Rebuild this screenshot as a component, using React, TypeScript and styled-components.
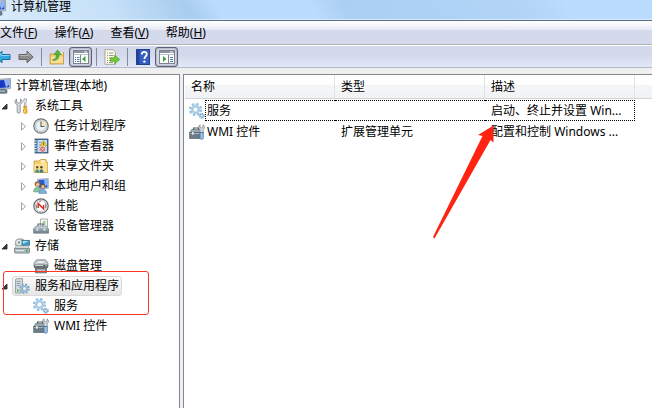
import React from "react";
import styled, { createGlobalStyle, css } from "styled-components";

const GlobalStyle = createGlobalStyle`
  * { box-sizing: border-box; }
  body {
    margin: 0;
    background: #efefef;
    color: #000;
    font: 12px/16px "Noto Sans", "Noto Sans CJK SC", sans-serif;
  }
  button { font: inherit; color: inherit; background: none; border: 0; padding: 0; margin: 0; }
  svg { display: block; flex: none; }
`;

/* ---------- icons ---------- */

type IconProps = { clipLeft?: number; children?: React.ReactNode };

const Icon = ({ clipLeft = 0, children }: IconProps) => (
  <svg
    width={16 - clipLeft}
    height={16}
    viewBox={`${clipLeft} 0 ${16 - clipLeft} 16`}
    aria-hidden="true"
  >
    {children}
  </svg>
);

const ComputerIcon = ({ clipLeft = 5 }: { clipLeft?: number }) => (
  <Icon clipLeft={clipLeft}>
    <path d="M2 1.5 15.5.5v10L3 11.5z" fill="#c9d0d8" stroke="#8a95a5" strokeWidth=".8" />
    <path d="M3 2.5 14.3 1.7v7.6L4 10z" fill="#1739c4" />
    <path d="M9 2.1 14.3 1.7v4.8L11 9.5z" fill="#8fb4f4" />
    <path d="M5 10.5h5v3H5z" fill="#8b98a3" />
    <rect x="3.5" y="11.5" width="8.5" height="3.8" rx="1" fill="#6d7f8c" stroke="#4e606c" strokeWidth=".6" />
    <path d="M5 13h5" stroke="#c2d0d6" />
  </Icon>
);

const ToolsIcon = () => (
  <Icon>
    <path
      d="M2.5 1v3.2l2 1 2-1V1c1.8.8 2.2 3.4.4 5l-.7.7v7.5c0 1.3-3 1.3-3 0V6.7L2 6C.4 4.5.8 2 2.5 1z"
      fill="#d8dcdf"
      stroke="#7d868c"
      strokeWidth=".8"
    />
    <path d="M10 .8h2.2l.4 3-.8 1V9h-1.4V4.8l-.8-1z" fill="#e8eaec" stroke="#8d9499" strokeWidth=".7" />
    <path d="M9.5 8.5h3.4l-.6 2 .7 1.2v2.8c0 1.2-3.500 1.2-3.500 0v-2.800l.7-1.200z" fill="#f4b52c" stroke="#c58512" strokeWidth=".7" />
    <path d="M10.8 11.5v3" stroke="#ffe6a0" />
  </Icon>
);

const ClockIcon = () => (
  <Icon>
    <circle cx="8" cy="8" r="7.2" fill="#dfe6ea" stroke="#6f767a" strokeWidth="1.2" />
    <circle cx="8" cy="8" r="5.4" fill="#e8f2f8" stroke="#a5adb2" strokeWidth=".7" />
    <path d="M8 8V2.6A5.4 5.4 0 0 1 13.4 8z" fill="#f8e4b6" />
    <path d="M8 3.5V8.5h3.5" fill="none" stroke="#50606c" strokeWidth="1.1" />
  </Icon>
);

const EventIcon = () => (
  <Icon>
    <rect x="2" y="1" width="13" height="14" fill="#4f79a8" stroke="#33536f" strokeWidth=".8" />
    <rect x="4.5" y="2" width="9.5" height="12" fill="#c4dcef" />
    <path d="M6 4.5h3M6 7h3M6 9.5h2M6 12h2" stroke="#7f9bb4" strokeWidth=".8" />
    <path d="M1.2 3h2.3M1.2 5.5h2.3M1.2 8h2.3M1.2 10.5h2.3M1.2 13h2.3" stroke="#e9eef2" />
    <path d="M10.5 2.5 13.8 8H7.5z" fill="#ffd628" stroke="#b58d10" strokeWidth=".5" />
    <path d="M10.6 4.5v2.3" stroke="#403400" strokeWidth=".8" />
    <circle cx="9.6" cy="11.3" r="2.7" fill="#d8564f" stroke="#fff" strokeWidth=".4" />
    <path d="m8.4 10.1 2.4 2.4m0-2.4-2.4 2.4" stroke="#fff" strokeWidth=".8" />
  </Icon>
);

const SharedFolderIcon = () => (
  <Icon>
    <path d="M1 3h5l1.5-1.5H13V4h1.5v10.5H1z" fill="#f3cf68" stroke="#c49b38" strokeWidth=".8" />
    <path d="M8 2.5h4v2H8z" fill="#fff7dc" />
    <path d="M1.5 6h6L9 4.8h5.2V14H1.5z" fill="#f9e193" />
    <circle cx="4.2" cy="9.3" r="1.2" fill="#644a30" />
    <path d="M2.2 14.5c0-4.200 4-4.200 4 0z" fill="#3f9b71" />
    <circle cx="8.4" cy="9.3" r="1.2" fill="#543c28" />
    <path d="M6.4 14.5c0-4.200 4-4.200 4 0z" fill="#3d7494" />
  </Icon>
);

const UsersIcon = () => (
  <Icon>
    <path d="M4.5 1.2 15.3.7v9.6L5 10.5z" fill="#d0dae4" stroke="#8895a5" strokeWidth=".7" />
    <path d="M5.5 2 14.4 1.6v7.8L5.5 9.6z" fill="#2a58d0" />
    <path d="M11 1.7 14.4 1.6V7L12 8z" fill="#8dbaf8" />
    <circle cx="4.3" cy="6" r="2.7" fill="#9a7448" />
    <circle cx="4.7" cy="6.8" r="1.7" fill="#edc79c" />
    <path d="M.5 14c0-6.500 7.500-6.500 7.500 0z" fill="#8fbf9d" stroke="#5f9674" strokeWidth=".5" />
    <circle cx="9.6" cy="8" r="2.6" fill="#6b5340" />
    <circle cx="9.9" cy="8.8" r="1.7" fill="#e8bc91" />
    <path d="M5.8 15.500c0-6 7.800-6 7.800 0z" fill="#7fb0d8" stroke="#4a7ba4" strokeWidth=".5" />
  </Icon>
);

const GaugeIcon = () => (
  <Icon>
    <circle cx="8" cy="8" r="7.2" fill="#f7f8f8" stroke="#5f6468" strokeWidth="1.2" />
    <circle cx="8" cy="8" r="5.6" fill="#fff" stroke="#a5aaae" strokeWidth=".7" />
    <path d="M3.6 6.5v4M12.4 5.5v4.500M6 4l2-.8" stroke="#666" strokeWidth=".8" />
    <path d="M5.200 10V5.400l5.400 5.400V7" fill="none" stroke="#dc2620" strokeWidth="1.4" />
  </Icon>
);

const DeviceIcon = () => (
  <Icon>
    <path d="M7.5 1h7v9h-7z" fill="#f2f5f4" stroke="#96a4a8" strokeWidth=".8" />
    <path d="M10 3h2.500v4H10z" fill="#a9cf8c" />
    <path d="M5 8V6h5v2" fill="none" stroke="#5b6870" strokeWidth="1.2" />
    <path d="M2.5 8h11l2 3.200H.6z" fill="#c3cdd3" stroke="#7d8a92" strokeWidth=".6" />
    <path d="M.6 11.200h14.900v4H.6z" fill="#7b8b95" stroke="#5a6872" strokeWidth=".6" />
    <path d="M1 11.800h14" stroke="#a8b6bd" />
    <path d="M3.5 10.500h1.800v2.300H3.500zM10.500 10.500h1.800v2.300h-1.800z" fill="#e1e8eb" />
  </Icon>
);

const StorageIcon = () => (
  <Icon>
    <path d="M2 2.5 4 1h5l2 6H1z" fill="#c9ced1" stroke="#7c868c" strokeWidth=".7" />
    <circle cx="5" cy="4.5" r="3.5" fill="#e4ebe7" stroke="#8f9ca0" strokeWidth=".8" />
    <circle cx="5" cy="4.5" r="1.2" fill="#85979b" />
    <rect x="8" y="2.3" width="7.6" height="5" fill="#3a9cc6" stroke="#2f6882" strokeWidth=".7" />
    <path d="M8.5 3h6L9 6z" fill="#a0dff0" />
    <path d="M2 8h12l1.6 2.500H.5z" fill="#e4e8ea" stroke="#919a9f" strokeWidth=".6" />
    <rect x=".5" y="10.3" width="15" height="4.800" rx=".8" fill="#afb9bf" stroke="#66727a" strokeWidth=".7" />
    <path d="M2 12.600h8" stroke="#e7edf0" />
    <path d="M12 11.500h1.800v2.300H12z" fill="#40bd34" />
  </Icon>
);

const DiskIcon = () => (
  <Icon>
    <path d="M3.500 1.800h9L15 5v4H1V5z" fill="#cdd1d3" stroke="#7e8488" strokeWidth=".8" />
    <ellipse cx="8" cy="4.200" rx="4.500" ry="1.600" fill="#f0f2f2" stroke="#8e9699" strokeWidth=".6" />
    <path d="M1 6.500h14v3.500H1z" fill="#6b7277" />
    <path d="M2 7.500h8" stroke="#c9cfd2" />
    <path d="M2.500 10h11v4.800h-11z" fill="#80868a" stroke="#5b6165" strokeWidth=".8" />
    <path d="M4 12.200h8" stroke="#dfe2e4" />
    <path d="M12.500 7.500h1.500" stroke="#8fd07c" />
  </Icon>
);

const Gear = ({ cx, cy, r, color }: { cx: number; cy: number; r: number; color: string }) => (
  <g fill="none" stroke={color}>
    <circle cx={cx} cy={cy} r={r} strokeWidth={r * 0.5} strokeDasharray={`${r * 0.44} ${r * 0.345}`} />
    <circle cx={cx} cy={cy} r={r * 0.7} strokeWidth={r * 0.4} />
    <circle cx={cx} cy={cy} r={r * 0.48} strokeWidth=".5" stroke="#6595b5" />
  </g>
);

const ServicesIcon = () => (
  <Icon>
    <Gear cx={6.5} cy={6.5} r={5.3} color="#94c2e0" />
    <circle cx="6.5" cy="6.5" r="3.9" fill="none" stroke="#c7e2f2" strokeWidth=".9" />
    <Gear cx={12.8} cy={12.8} r={2.5} color="#86b2cf" />
  </Icon>
);

const ServerAppsIcon = () => (
  <Icon>
    <path d="M1.5 1.5 3 .6h5.500v13L7.300 15H1.500z" fill="#d3dade" stroke="#87949b" strokeWidth=".8" />
    <path d="M2.5 3.500h4M2.500 5.500h4M2.500 7.500h4" stroke="#8b979e" strokeWidth=".8" />
    <path d="M3 11.500h1.800v2H3z" fill="#5dbb43" />
    <Gear cx={10.5} cy={10.7} r={4.2} color="#7baac8" />
    <circle cx="10.5" cy="10.7" r="3" fill="none" stroke="#b5d3e5" strokeWidth=".8" />
  </Icon>
);

const WmiIcon = () => (
  <Icon>
    <path d="M4.500 6V4h5v2" fill="none" stroke="#49565e" strokeWidth="1.200" />
    <path d="M2.500 5.500h10L14 9H.6z" fill="#9da9b0" stroke="#5e6b73" strokeWidth=".6" />
    <path d="M.6 8.500h13v6H.6z" fill="#6b7b86" stroke="#4a5760" strokeWidth=".6" />
    <path d="M1 9.500h12" stroke="#a5b2b9" />
    <path d="M3 8h1.700v2.800H3z" fill="#dfe6e9" />
    <path d="M11 .8v2.500l1.500.8 1.500-.8V.8c2 1.200 2 3.800.2 4.800v3h-3.200v-3c-1.800-1.200-1.700-3.700 0-4.800z" fill="#d6dcdf" stroke="#747f86" strokeWidth=".7" />
    <path d="M11 8.500h3.300v5.300c0 2-3.300 2-3.300 0z" fill="#9cc4e6" stroke="#3c6a98" strokeWidth=".7" />
  </Icon>
);

const arrowShape = "M1 5.500h8V2.200l6.200 5.800L9 13.800v-3.300H1z";

const BackIcon = () => (
  <Icon clipLeft={5}>
    <g transform="matrix(-1 0 0 1 16 0)">
      <path d={arrowShape} fill="#31a8e0" stroke="#1f6e9d" />
      <path d="M1.500 6.500h8.500V4.500l3 3" fill="none" stroke="#8ad7f5" />
    </g>
  </Icon>
);

const ForwardIcon = () => (
  <Icon>
    <path d={arrowShape} fill="#8b8b8b" stroke="#636363" />
    <path d="M1.500 6.500h8.500V4.500l3 3" fill="none" stroke="#b5b5b5" />
  </Icon>
);

const UpFolderIcon = () => (
  <Icon>
    <path d="M1 5h5.500L8 3.500h6.500V15H1z" fill="#eccb74" stroke="#bf963c" strokeWidth=".8" />
    <path d="M2 7.500h12V14H2z" fill="#f7de98" />
    <path d="M10 3.200h3.500v2H10z" fill="#fffbe8" />
    <path d="M3.500 11c3-.5 4-2.500 4-5.500H5.200L8.500 1l4 4.500H10c0 4-2 6.500-6.500 5.500z" fill="#54b93b" stroke="#2f8225" strokeWidth=".6" />
  </Icon>
);

const PaneIcon = ({ side }: { side: "left" | "right" }) => (
  <Icon>
    <rect x=".5" y="1.5" width="15" height="13" fill="#fff" stroke="#7d8491" />
    <path d="M1 2h14v2H1z" fill="#8993a4" />
    <path d="M11 3h3" stroke="#eef1f5" />
    <path d="M1 5.500h14" stroke="#bac2cd" />
    {side === "left" ? (
      <>
        <path d="M7.500 6v8" stroke="#7d8491" />
        <path d="M2 8.500h1m1 0h2.500M2 10.500h1m1 0h2.500M2 12.500h1m1 0h2.500" stroke="#4f77ab" />
        <path d="M12.500 7v6L9 10z" fill="#39a52e" />
      </>
    ) : (
      <>
        <path d="M9.500 6v8" stroke="#7d8491" />
        <path d="M11 8.500H14M11 10.500H14M11 12.500H14" stroke="#4f77ab" />
        <path d="M4 7v6l3.500-3z" fill="#39a52e" />
      </>
    )}
  </Icon>
);

const ExportIcon = () => (
  <Icon>
    <path d="M1 .7h8L11.500 3v12.300H1z" fill="#fdfae5" stroke="#9b9b84" strokeWidth=".8" />
    <path d="M3 4h1m1 0h4.500M3 6.500h1m1 0h4.500M3 9h1m1 0h2M3 11.500h1m1 0h2M3 13.500h1m1 0h4" stroke="#858b90" strokeWidth=".9" />
    <path d="M6.500 8.800h4.200V6.200l5 4.300-5 4.300v-2.600H6.500z" fill="#75ca3c" stroke="#4b9b24" strokeWidth=".7" />
  </Icon>
);

const HelpIcon = () => (
  <Icon>
    <rect x="1.5" y=".5" width="13" height="15" fill="#365fc0" stroke="#253f91" />
    <path d="M2 1h2.500v14H2z" fill="#20429c" />
    <path d="M6.800 5.500c0-3.400 5-3.300 5-.3 0 2.100-2.400 2.100-2.400 4.800" fill="none" stroke="#fff" strokeWidth="1.800" />
    <circle cx="9.400" cy="12.600" r="1.200" fill="#fff" />
  </Icon>
);

const ExpanderIcon = ({ open }: { open: boolean }) => (
  <svg width="7" height="9" viewBox="0 0 7 9" aria-hidden="true">
    {open ? (
      <path d="M6 2v5H1z" fill="#3c3c3c" stroke="#202020" strokeWidth=".8" />
    ) : (
      <path d="M1.500 .8v7.400l4-3.700z" fill="#fff" stroke="#a0a0a0" />
    )}
  </svg>
);

/* ---------- window frame ---------- */

const Window = styled.main`
  display: flex;
  flex-direction: column;
  min-height: 100vh;
  overflow: hidden;
`;

const TitleBar = styled.header`
  display: flex;
  align-items: flex-start;
  gap: 5px;
  height: 20px;
  border-bottom: 1px solid #d5edfa;
  background: linear-gradient(
    60deg,
    #d8eafb 0%,
    #c5e0f8 18%,
    #a9cdef 29%,
    #badcfd 34%,
    #badcfd 48%,
    #abcff2 53%,
    #b1d4f7 80%,
    #badcfe 87%
  );
`;

const Title = styled.h1`
  margin: 0;
  font-size: 12px;
  line-height: 14px;
  font-weight: 400;
`;

const MenuBar = styled.nav`
  display: flex;
  align-items: center;
  gap: 17px;
  height: 25px;
  border-top: 1px solid #596b7c;
  border-bottom: 1px solid #b2b2ad;
  background: linear-gradient(#fff 0, #e7eaf5 9px, #d4d9ec 9px);
`;

const MenuButton = styled.button`
  line-height: 18px;
`;

const ToolBar = styled.div`
  display: flex;
  align-items: center;
  gap: 7px;
  height: 23px;
  border-top: 1px solid #fff;
  border-bottom: 1px solid #b2bacb;
  background: linear-gradient(#d3d8eb 40%, #e1e8f7);
`;

const ToolButton = styled.button<{ $pressed?: boolean }>`
  display: grid;
  place-items: center;
  height: 20px;
  ${({ $pressed }) =>
    $pressed &&
    css`
      width: 23px;
      border: 1px solid #5c6272;
      border-radius: 3px;
      background: #d5d9e7;
      box-shadow: inset 0 0 2px #6c7182;
    `}
`;

const ToolGroup = styled.div`
  display: flex;
  align-items: center;
  gap: 4px;
`;

const Separator = styled.span`
  width: 1px;
  height: 18px;
  background: #85899a;
`;

const Body = styled.div`
  flex: 1;
  display: grid;
  grid-template-columns: 180px minmax(0, 1fr);
  gap: 3px;
  padding-top: 6px;
`;

/* ---------- console tree ---------- */

const TreePane = styled.aside`
  border-top: 1px solid #828790;
  border-right: 1px solid #828790;
  background: #fff;
  padding-top: 1px;
`;

const TreeList = styled.ul`
  list-style: none;
  margin: 0;
  padding: 0;
`;

const TreeItem = styled.li`
  position: relative;
`;

const TreeRow = styled.div<{ $depth: number }>`
  display: flex;
  align-items: center;
  height: 20px;
  padding-left: ${({ $depth }) => $depth * 19}px;
`;

const Expander = styled.button`
  display: flex;
  width: 12px;
  padding-left: 1px;
`;

const TreeButton = styled.button<{ $selected?: boolean }>`
  display: flex;
  align-items: center;
  gap: 5px;
  height: 20px;
  padding: 0 2px 0 1px;
  border: 1px solid transparent;
  border-radius: 3px;
  white-space: nowrap;
  ${({ $selected }) =>
    $selected &&
    css`
      border-color: #d9d9d9;
      background: linear-gradient(#fafafa, #e6e6e6);
    `}
`;

const RootButton = styled.button`
  display: flex;
  align-items: center;
  gap: 5px;
  height: 20px;
  white-space: nowrap;
`;

const HighlightBox = styled.span`
  position: absolute;
  inset: -5px auto auto 3px;
  width: 146px;
  height: 44px;
  border: 1px solid #ff3528;
  border-radius: 3px;
  pointer-events: none;
`;

/* ---------- list view ---------- */

const ListPane = styled.section`
  position: relative;
  border-top: 1px solid #828790;
  border-left: 1px solid #828790;
  background: #fff;
  padding-left: 1px;
`;

const Table = styled.table`
  width: 100%;
  table-layout: fixed;
  border-collapse: separate;
  border-spacing: 0;
`;

const TableBody = styled.tbody`
  &::before {
    content: "";
    display: block;
    height: 1px;
  }
`;

const HeadCell = styled.th`
  height: 24px;
  padding: 0 6px;
  border-right: 1px solid #dfe1e3;
  border-bottom: 1px solid #d5d5d5;
  background: linear-gradient(#fff 40%, #f5f6f8 45%, #f1f2f4);
  text-align: left;
  font-weight: 400;
  &:last-child { border-right: 0; }
`;

const Cell = styled.td<{ $focused?: boolean; $edge?: "start" | "end" }>`
  height: 21px;
  padding: 0 0 0 ${({ $edge }) => ($edge === "start" ? 1 : 6)}px;
  border: 0 dotted ${({ $focused }) => ($focused ? "#000" : "transparent")};
  border-width: 1px ${({ $edge }) => ($edge === "end" ? 1 : 0)}px 1px ${({ $edge }) => ($edge === "start" ? 1 : 0)}px;
  white-space: nowrap;
  line-height: 16px;
`;

const IconCell = styled.td`
  padding: 0 0 0 4px;
`;

const Pointer = styled.svg`
  position: absolute;
  left: 248px;
  top: 50px;
  pointer-events: none;
`;

/* ---------- data ---------- */

type Node = {
  label: string;
  icon: () => React.ReactElement;
  open?: boolean;
  selected?: boolean;
  children?: Node[];
};

const tree: Node[] = [
  {
    label: "系统工具",
    icon: ToolsIcon,
    open: true,
    children: [
      { label: "任务计划程序", icon: ClockIcon, open: false },
      { label: "事件查看器", icon: EventIcon, open: false },
      { label: "共享文件夹", icon: SharedFolderIcon, open: false },
      { label: "本地用户和组", icon: UsersIcon, open: false },
      { label: "性能", icon: GaugeIcon, open: false },
      { label: "设备管理器", icon: DeviceIcon },
    ],
  },
  {
    label: "存储",
    icon: StorageIcon,
    open: true,
    children: [{ label: "磁盘管理", icon: DiskIcon }],
  },
  {
    label: "服务和应用程序",
    icon: ServerAppsIcon,
    open: true,
    selected: true,
    children: [
      { label: "服务", icon: ServicesIcon },
      { label: "WMI 控件", icon: WmiIcon },
    ],
  },
];

const menus = [
  ["文件", "F"],
  ["操作", "A"],
  ["查看", "V"],
  ["帮助", "H"],
];

const rows = [
  { name: "服务", type: "", description: "启动、终止并设置 Win...", icon: ServicesIcon, focused: true },
  { name: "WMI 控件", type: "扩展管理单元", description: "配置和控制 Windows ...", icon: WmiIcon, focused: false },
];

const Branch = ({ node, depth }: { node: Node; depth: number }) => (
  <TreeItem>
    <TreeRow $depth={depth}>
      {node.open === undefined ? (
        <Expander as="span" />
      ) : (
        <Expander aria-label={node.label} aria-expanded={node.open}>
          <ExpanderIcon open={node.open} />
        </Expander>
      )}
      <TreeButton $selected={node.selected}>
        <node.icon />
        {node.label}
      </TreeButton>
    </TreeRow>
    {node.children && (
      <TreeList>
        {node.children.map((child) => (
          <Branch key={child.label} node={child} depth={depth + 1} />
        ))}
      </TreeList>
    )}
    {node.selected && <HighlightBox />}
  </TreeItem>
);

export default function App() {
  return (
    <>
      <GlobalStyle />
      <Window>
        <TitleBar>
          <ComputerIcon clipLeft={10} />
          <Title>计算机管理</Title>
        </TitleBar>
        <MenuBar>
          {menus.map(([label, key]) => (
            <MenuButton key={key}>
              {label}(<u>{key}</u>)
            </MenuButton>
          ))}
        </MenuBar>
        <ToolBar>
          <ToolButton aria-label="后退"><BackIcon /></ToolButton>
          <ToolButton aria-label="前进"><ForwardIcon /></ToolButton>
          <Separator />
          <ToolGroup>
            <ToolButton aria-label="上一级"><UpFolderIcon /></ToolButton>
            <ToolButton $pressed aria-label="显示控制台树"><PaneIcon side="left" /></ToolButton>
            <Separator />
          </ToolGroup>
          <ToolButton aria-label="导出列表"><ExportIcon /></ToolButton>
          <Separator />
          <ToolGroup>
            <ToolButton aria-label="帮助"><HelpIcon /></ToolButton>
            <ToolButton $pressed aria-label="显示操作窗格"><PaneIcon side="right" /></ToolButton>
          </ToolGroup>
        </ToolBar>
        <Body>
          <TreePane>
            <TreeList>
              <TreeItem>
                <RootButton>
                  <ComputerIcon />
                  计算机管理(本地)
                </RootButton>
                <TreeList>
                  {tree.map((node) => (
                    <Branch key={node.label} node={node} depth={0} />
                  ))}
                </TreeList>
              </TreeItem>
            </TreeList>
          </TreePane>
          <ListPane>
            <Table>
              <colgroup>
                <col width="20" />
                <col width="130" />
                <col width="150" />
                <col width="150" />
                <col />
              </colgroup>
              <thead>
                <tr>
                  <HeadCell colSpan={2}>名称</HeadCell>
                  <HeadCell>类型</HeadCell>
                  <HeadCell>描述</HeadCell>
                  <HeadCell as="td" />
                </tr>
              </thead>
              <TableBody>
                {rows.map((row) => (
                  <tr key={row.name}>
                    <IconCell><row.icon /></IconCell>
                    <Cell $focused={row.focused} $edge="start">{row.name}</Cell>
                    <Cell $focused={row.focused}>{row.type}</Cell>
                    <Cell $focused={row.focused} $edge="end">{row.description}</Cell>
                    <td />
                  </tr>
                ))}
              </TableBody>
            </Table>
            <Pointer width="64" height="114" viewBox="0 0 64 114" aria-hidden="true">
              <path d="M61.5.5 46 10l4.500 1L1 112l1.500 1.500L58.500 15l3 2.500z" fill="#ff2412" />
            </Pointer>
          </ListPane>
        </Body>
      </Window>
    </>
  );
}
